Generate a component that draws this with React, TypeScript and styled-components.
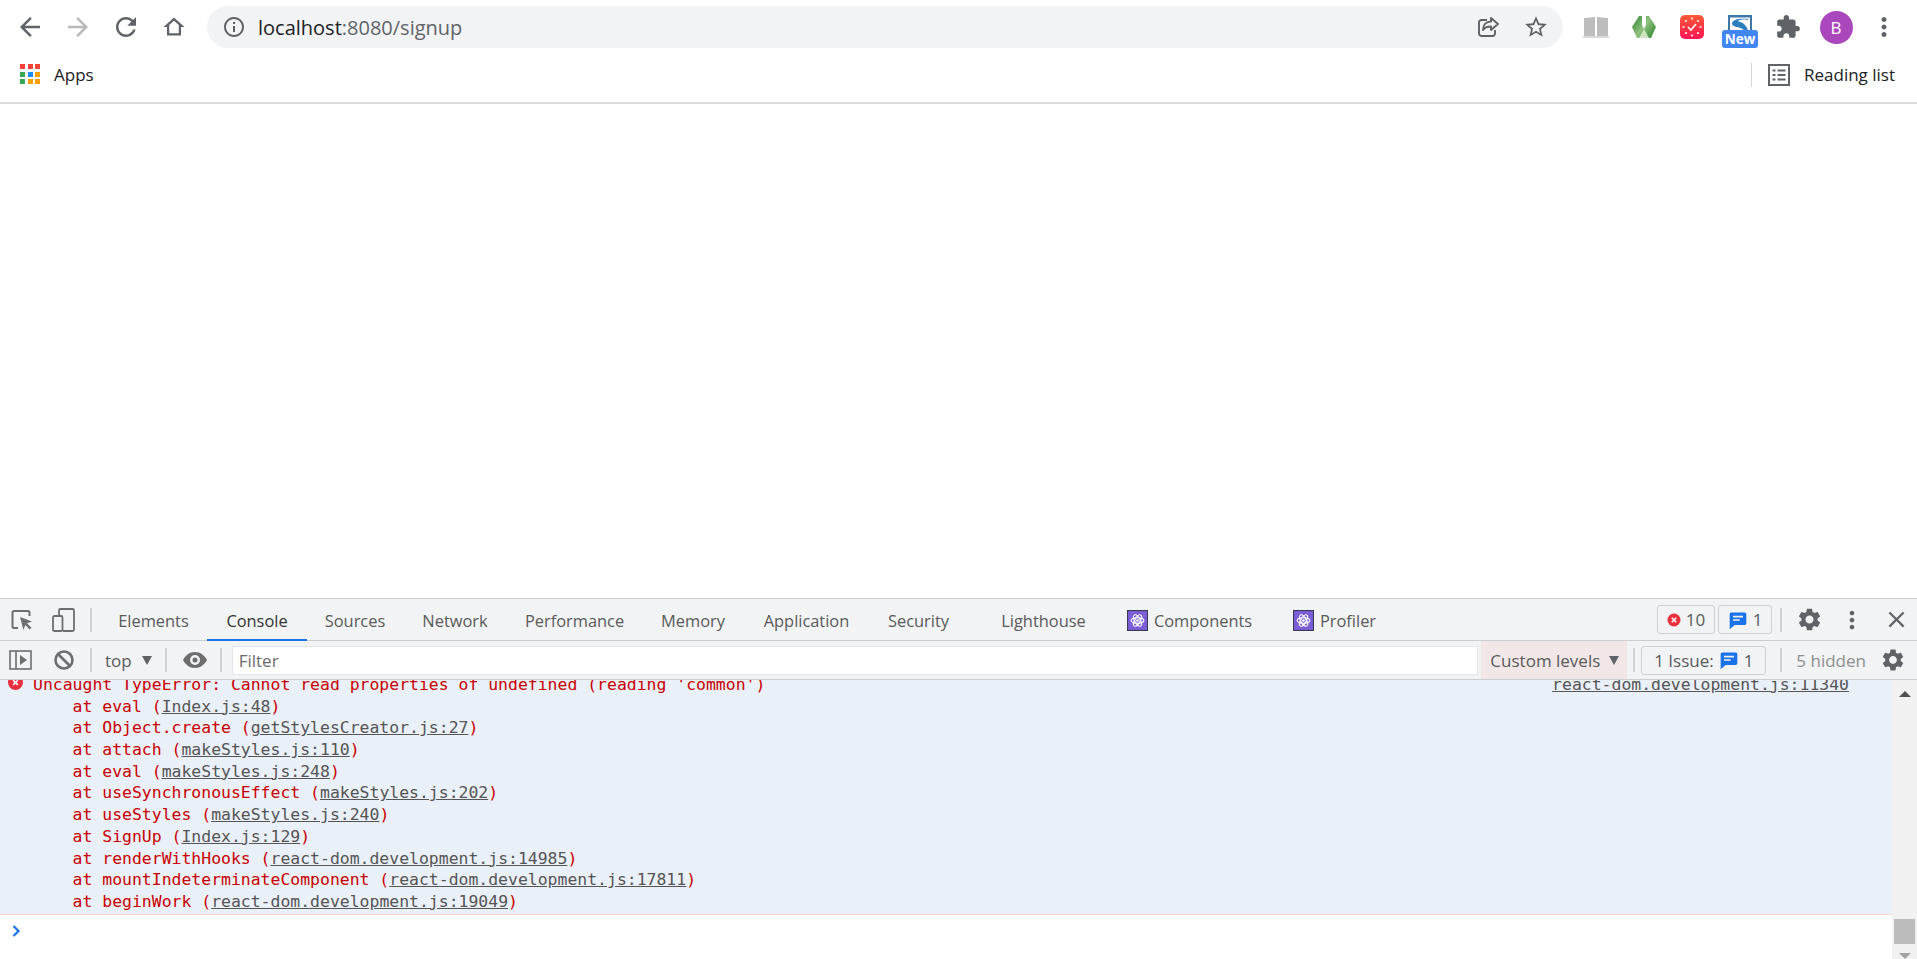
import React from 'react';
import styled, { createGlobalStyle } from "styled-components";

const GlobalStyle = createGlobalStyle`
  html, body {
    margin: 0;
    height: 100%;
    overflow: hidden;
    background: #fff;
    font-family: "Open Sans", "Noto Sans", sans-serif;
  }
`;

const Wrapper = styled.div`
  height: 100vh;
  display: flex;
  flex-direction: column;
`;

/* browser chrome */
const Toolbar = styled.div`
  height: 48px;
  flex: none;
  display: flex;
  align-items: flex-end;
  padding: 0 9px 0 6px;
`;
const IconSlot = styled.div`
  position: relative;
  width: 48px;
  height: 42px;
  flex: none;
  display: flex;
  align-items: center;
  justify-content: center;
`;
const Omnibox = styled.div`
  flex: 1;
  height: 42px;
  margin: 0 9px;
  padding: 0 3px 0 15px;
  border-radius: 21px;
  background: #f1f3f4;
  display: flex;
  align-items: center;
`;
const Url = styled.div`
  flex: 1;
  margin-left: 12px;
  font-size: 20px;
  color: #5f6368;
  span {
    color: #202124;
  }
`;
const Icon = styled.svg<{ $size?: number; $color?: string }>`
  width: ${(p) => p.$size ?? 24}px;
  height: ${(p) => p.$size ?? 24}px;
  flex: none;
  fill: ${(p) => p.$color ?? "#5f6368"};
  display: block;
`;
const Avatar = styled.div`
  width: 33px;
  height: 33px;
  border-radius: 50%;
  background: #ab47bc;
  color: #fff;
  font-size: 17px;
  display: flex;
  align-items: center;
  justify-content: center;
`;
const NewBadge = styled.div`
  position: absolute;
  left: 6px;
  top: 24px;
  width: 36px;
  height: 18px;
  border-radius: 3px;
  background: #4285f4;
  color: #fff;
  font-size: 13.5px;
  font-weight: 700;
  line-height: 18px;
  text-align: center;
`;
const ScreenSvg = styled.svg`
  width: 24px;
  height: 17px;
  margin-top: -7px;
`;

const BookmarksBar = styled.div`
  height: 54px;
  flex: none;
  border-bottom: 2px solid #dcdcdc;
  display: flex;
  align-items: center;
  padding: 0 22px 0 20px;
`;
const AppsGrid = styled.div`
  width: 20px;
  height: 20px;
  margin-top: -2px;
  display: grid;
  grid-template-columns: repeat(3, 5px);
  grid-template-rows: repeat(3, 5px);
  gap: 2.5px;
`;
const AppsDot = styled.i<{ $c: string }>`
  background: ${(p) => p.$c};
`;
const BookmarkLabel = styled.div`
  margin: -2px 0 0 14px;
  font-size: 17px;
  color: #202124;
`;
const ReadingList = styled.div`
  margin-left: auto;
  display: flex;
  align-items: center;
`;
const BarDivider = styled.div`
  width: 1px;
  height: 24px;
  background: #d4d5d7;
  margin-right: 16px;
`;

const Page = styled.div`
  flex: 1;
  background: #fff;
`;

/* devtools */
const DevTools = styled.div`
  height: 361px;
  flex: none;
  display: flex;
  flex-direction: column;
  border-top: 1px solid #cbcdd1;
  box-sizing: border-box;
  background: #f1f3f4;
`;
const TabBar = styled.div`
  height: 42px;
  flex: none;
  box-sizing: border-box;
  border-bottom: 1px solid #cbcdd1;
  display: flex;
  align-items: stretch;
`;
const ToolSlot = styled.div<{ $w: number }>`
  width: ${(p) => p.$w}px;
  flex: none;
  display: flex;
  align-items: center;
  justify-content: center;
`;
const Sep = styled.div<{ $mx?: number; $h?: number }>`
  width: 2px;
  height: ${(p) => p.$h ?? 24}px;
  align-self: center;
  flex: none;
  margin: 0 ${(p) => p.$mx ?? 0}px;
  background: #cfd1d4;
`;
const Tab = styled.div<{ $w: number; $active?: boolean; $gap?: number }>`
  width: ${(p) => p.$w}px;
  margin-right: ${(p) => p.$gap ?? 0}px;
  flex: none;
  display: flex;
  align-items: center;
  justify-content: center;
  gap: 6px;
  font-size: 16.4px;
  color: ${(p) => (p.$active ? "#333" : "#5a5a5a")};
  box-shadow: ${(p) => (p.$active ? "inset 0 -2px 0 #1a73e8" : "none")};
  margin-bottom: -1px;
`;
const TabEnd = styled.div`
  margin-left: auto;
  display: flex;
  align-items: center;
`;
const CountBadge = styled.div<{ $w: number; $ml?: number }>`
  width: ${(p) => p.$w}px;
  height: 29px;
  margin-left: ${(p) => p.$ml ?? 0}px;
  box-sizing: border-box;
  flex: none;
  border: 1px solid #cdcfd2;
  border-radius: 3px;
  display: flex;
  align-items: center;
  justify-content: center;
  gap: 5px;
  font-size: 17px;
  color: #5a5a5a;
`;
const ConsoleBar = styled.div`
  height: 39px;
  flex: none;
  box-sizing: border-box;
  border-bottom: 1px solid #cbcdd1;
  display: flex;
  align-items: center;
`;
const Label = styled.div<{ $c?: string; $ml?: number; $mr?: number }>`
  font-size: 17px;
  padding-top: 1px;
  color: ${(p) => p.$c ?? "#5a5a5a"};
  margin-left: ${(p) => p.$ml ?? 0}px;
  margin-right: ${(p) => p.$mr ?? 0}px;
  white-space: nowrap;
`;
const Caret = styled.div<{ $up?: boolean; $c?: string; $w?: number; $h?: number; $ml?: number }>`
  width: 0;
  height: 0;
  flex: none;
  margin-left: ${(p) => p.$ml ?? 0}px;
  border-left: ${(p) => p.$w ?? 5}px solid transparent;
  border-right: ${(p) => p.$w ?? 5}px solid transparent;
  ${(p) =>
    p.$up
      ? `border-bottom: ${p.$h ?? 9}px solid ${p.$c ?? "#5f6368"};`
      : `border-top: ${p.$h ?? 9}px solid ${p.$c ?? "#5f6368"};`}
`;
const FilterInput = styled.input`
  flex: 1;
  min-width: 0;
  height: 29px;
  box-sizing: border-box;
  padding: 1px 6px 0;
  border: 1px solid #e3e4e6;
  background: #fff;
  outline: none;
  font-family: inherit;
  font-size: 17px;
  &::placeholder {
    color: #6b6b6b;
    opacity: 1;
  }
`;
const LevelsButton = styled.div`
  width: 146px;
  height: 38px;
  flex: none;
  margin-left: 3px;
  box-sizing: border-box;
  padding-left: 9px;
  background: #f1e7e7;
  display: flex;
  align-items: center;
`;

const ConsoleBody = styled.div`
  flex: 1;
  min-height: 0;
  display: flex;
  background: #fff;
`;
const ConsoleMain = styled.div`
  flex: 1;
  min-width: 0;
  display: flex;
  flex-direction: column;
`;
const Messages = styled.div`
  height: 235px;
  flex: none;
  box-sizing: border-box;
  overflow: hidden;
  border-bottom: 1px solid #fdd6d6;
  background: #eaf0f8;
  font-family: "DejaVu Sans Mono", "Liberation Mono", monospace;
  font-size: 16.46px;
  line-height: 21.7px;
  color: #c80000;
`;
const ErrorLine = styled.div`
  position: relative;
  display: flex;
  align-items: center;
  margin-top: -6px;
  height: 21.7px;
  padding: 0 43px 0 33px;
  white-space: pre;
`;
const ErrorDot = styled.svg`
  position: absolute;
  left: 8px;
  top: 1px;
  width: 15px;
  height: 15px;
`;
const SourceLink = styled.a`
  color: #555;
  text-decoration: underline;
`;
const RightLink = styled(SourceLink)`
  margin-left: auto;
`;
const FrameLine = styled.div`
  height: 21.7px;
  padding-left: 33px;
  white-space: pre;
`;
const Prompt = styled.div`
  flex: 1;
  padding: 10px 0 0 12px;
`;
const PromptChevron = styled.svg`
  display: block;
  width: 9px;
  height: 12px;
`;
const Scrollbar = styled.div`
  width: 25px;
  flex: none;
  overflow: hidden;
  background: #f1f1f1;
  display: flex;
  flex-direction: column;
  align-items: center;
  padding-top: 11px;
`;
const Thumb = styled.div`
  width: 21px;
  height: 25px;
  flex: none;
  margin-top: auto;
  margin-bottom: 9px;
  background: #bcbcbc;
`;

const ARROW_BACK = "M20 11H7.83l5.59-5.59L12 4l-8 8 8 8 1.41-1.41L7.83 13H20v-2z";
const ARROW_FORWARD = "M12 4l-1.41 1.41L16.17 11H4v2h12.17l-5.58 5.59L12 20l8-8z";
const RELOAD = "M17.65 6.35C16.2 4.9 14.21 4 12 4c-4.42 0-7.99 3.58-7.99 8s3.57 8 7.99 8c3.73 0 6.84-2.55 7.73-6h-2.08c-.82 2.33-3.04 4-5.65 4-3.31 0-6-2.69-6-6s2.69-6 6-6c1.66 0 3.14.69 4.22 1.78L13 11h7V4l-2.35 2.35z";
const HOME = "M12 2.500L1.500 12H5v8.500h14V12h3.500L12 2.500zm4.800 15.800H7.200v-8.200l4.800-4.300 4.800 4.300v8.200z";
const INFO = "M11 7h2v2h-2zm0 4h2v6h-2zm1-9C6.48 2 2 6.48 2 12s4.48 10 10 10 10-4.48 10-10S17.52 2 12 2zm0 18c-4.41 0-8-3.59-8-8s3.59-8 8-8 8 3.59 8 8-3.59 8-8 8z";
const STAR = "M22 9.24l-7.19-.62L12 2 9.19 8.63 2 9.24l5.46 4.73L5.82 21 12 17.27 18.18 21l-1.63-7.03L22 9.24zM12 15.4l-3.76 2.27 1-4.28-3.32-2.88 4.38-.38L12 6.1l1.71 4.04 4.38.38-3.32 2.88 1 4.28L12 15.4z";
const PUZZLE = "M20.5 11H19V7c0-1.1-.9-2-2-2h-4V3.5C13 2.12 11.88 1 10.5 1S8 2.12 8 3.5V5H4c-1.1 0-1.99.9-1.99 2v3.8H3.5c1.49 0 2.7 1.21 2.7 2.7s-1.21 2.7-2.7 2.7H2V20c0 1.1.9 2 2 2h3.8v-1.5c0-1.49 1.21-2.7 2.7-2.7 1.49 0 2.7 1.21 2.7 2.7V22H17c1.1 0 2-.9 2-2v-4h1.5c1.38 0 2.5-1.12 2.5-2.5S21.88 11 20.5 11z";
const GEAR = "M19.14 12.94c.04-.3.06-.61.06-.94 0-.32-.02-.64-.07-.94l2.03-1.58c.18-.14.23-.41.12-.61l-1.92-3.32c-.12-.22-.37-.29-.59-.22l-2.39.96c-.5-.38-1.03-.7-1.62-.94l-.36-2.54c-.04-.24-.24-.41-.48-.41h-3.84c-.24 0-.43.17-.47.41l-.36 2.54c-.59.24-1.13.57-1.62.94l-2.39-.96c-.22-.08-.47 0-.59.22L2.74 8.87c-.12.21-.08.47.12.61l2.03 1.58c-.05.3-.09.63-.09.94s.02.64.07.94l-2.03 1.58c-.18.14-.23.41-.12.61l1.92 3.32c.12.22.37.29.59.22l2.39-.96c.5.38 1.03.7 1.62.94l.36 2.54c.05.24.24.41.48.41h3.84c.24 0 .44-.17.47-.41l.36-2.54c.59-.24 1.13-.56 1.62-.94l2.39.96c.22.08.47 0 .59-.22l1.92-3.32c.12-.22.07-.47-.12-.61l-2.01-1.58zM12 15.6c-1.98 0-3.6-1.62-3.6-3.6s1.62-3.6 3.6-3.6 3.6 1.62 3.6 3.6-1.62 3.6-3.6 3.6z";
const DOTS = "M12 8c1.1 0 2-.9 2-2s-.9-2-2-2-2 .9-2 2 .9 2 2 2zm0 2c-1.1 0-2 .9-2 2s.9 2 2 2 2-.9 2-2-.9-2-2-2zm0 6c-1.1 0-2 .9-2 2s.9 2 2 2 2-.9 2-2-.9-2-2-2z";
const CLOSE = "M19 6.41L17.59 5 12 10.59 6.41 5 5 6.41 10.59 12 5 17.59 6.41 19 12 13.41 17.59 19 19 17.59 13.41 12z";
const MESSAGE = "M4 3h16c1.1 0 2 .9 2 2v11c0 1.1-.9 2-2 2H8l-6 5V5c0-1.100.9-2 2-2zm2 4v2h12V7H6zm0 4v2h8v-2H6z";

const Glyph = ({ d, size, color }: { d: string; size?: number; color?: string }) => (
  <Icon viewBox="0 0 24 24" $size={size} $color={color}>
    <path fillRule="evenodd" d={d} />
  </Icon>
);

const ShareIcon = () => (
  <svg width="24" height="24" viewBox="0 0 24 24" fill="none" stroke="#5f6368" strokeWidth="1.9">
    <path d="M11 5H5.500A2.500 2.500 0 0 0 3 7.500v11A2.500 2.500 0 0 0 5.500 21h11a2.500 2.500 0 0 0 2.500-2.500V15" />
    <path strokeLinejoin="round" d="M15 3l7 6-7 6v-3.500c-4 0-6.500 1-8 3.500 0-5 3-8.500 8-8.500z" />
  </svg>
);

const BookIcon = () => (
  <svg width="26" height="24" viewBox="0 0 26 24">
    <path fill="#bdbdbd" d="M1 3l11 -1v19l-11 1zM14 2l11 1v19l-11-1z" />
    <path fill="#d9d9d9" d="M0 21h26v2H0z" />
  </svg>
);

const GreenIcon = () => (
  <svg width="24" height="22" viewBox="0 0 24 22">
    <defs>
      <linearGradient id="greenFade" x1="0" x2="1" y1="0" y2="0.700">
        <stop offset="0" stopColor="#2f7d32" />
        <stop offset="0.550" stopColor="#8fc27f" />
        <stop offset="1" stopColor="#3f8f3e" />
      </linearGradient>
    </defs>
    <path fill="url(#greenFade)" d="M7 0h3v9l2 4 2-4V0h3l7 11-5 11H5L0 11z" />
    <path fill="#cfe5c4" d="M12 13l5 9H7z" />
  </svg>
);

const ClockIcon = () => (
  <svg width="24" height="24" viewBox="0 0 24 24">
    <defs>
      <linearGradient id="clockFade" x1="0" x2="0" y1="0" y2="1">
        <stop offset="0" stopColor="#ff5a36" />
        <stop offset="1" stopColor="#ff1555" />
      </linearGradient>
    </defs>
    <rect width="24" height="24" rx="5" fill="url(#clockFade)" />
    <g fill="#fff">
      <circle cx="12" cy="3.500" r="1" />
      <circle cx="12" cy="20.500" r="1" />
      <circle cx="3.500" cy="12" r="1" />
      <circle cx="20.500" cy="12" r="1" />
      <circle cx="6" cy="6" r="1" />
      <circle cx="18" cy="6" r="1" />
      <circle cx="6" cy="18" r="1" />
      <circle cx="18" cy="18" r="1" />
    </g>
    <path d="M8 12l3 3 5-6" fill="none" stroke="#fff" strokeWidth="1.600" />
  </svg>
);

const ScreenIcon = () => (
  <ScreenSvg viewBox="0 0 24 17">
    <path fill="#3f78a8" d="M0 0h24v17h-2V2.500H2V17H0z" />
    <path fill="#2d7fc0" d="M4 9c0-4 5-6 16-5l0 1c-7-1-10 0-10 1.500 3 0 7 2 10 8l-4 1C13 11 5 13 4 9z" />
  </ScreenSvg>
);

const ReadingIcon = () => (
  <svg width="22" height="22" viewBox="0 0 22 22" fill="none" stroke="#5f6368" strokeWidth="2">
    <rect x="1" y="1" width="20" height="20" />
    <path d="M4.500 6.500h3M9.500 6.500h8M4.500 11h3M9.500 11h8M4.500 15.500h3M9.500 15.500h8" />
  </svg>
);

const InspectIcon = () => (
  <svg width="22" height="22" viewBox="0 0 22 22" fill="none" stroke="#6e6e6e" strokeWidth="2">
    <path d="M7 19H3a1.500 1.500 0 0 1-1.500-1.500v-14A1.500 1.500 0 0 1 3 2h14a1.500 1.500 0 0 1 1.500 1.500V7" />
    <path fill="#6e6e6e" stroke="none" d="M9 8l12 4.500-5 1.800 4.500 4.500-1.700 1.700-4.500-4.500-1.800 5z" />
  </svg>
);

const DeviceIcon = () => (
  <svg width="23" height="24" viewBox="0 0 23 24" fill="none" stroke="#6e6e6e" strokeWidth="1.800">
    <path d="M7 7V2.500A1.500 1.500 0 0 1 8.500 1h12A1.500 1.500 0 0 1 22 2.500v19a1.500 1.500 0 0 1-1.500 1.500H11" />
    <rect x="1" y="8" width="9.500" height="15" rx="1.500" />
  </svg>
);

const SidebarIcon = () => (
  <svg width="23" height="20" viewBox="0 0 23 20">
    <rect x="1" y="1" width="21" height="18" fill="none" stroke="#6e6e6e" strokeWidth="1.600" />
    <path d="M7 1v18" stroke="#6e6e6e" strokeWidth="1.600" />
    <path d="M11 5l7 5-7 5z" fill="#6e6e6e" />
  </svg>
);

const BlockIcon = () => (
  <svg width="20" height="20" viewBox="0 0 20 20" fill="none" stroke="#6e6e6e" strokeWidth="2.600">
    <circle cx="10" cy="10" r="8.500" />
    <path d="M4 4l12 12" />
  </svg>
);

const EyeIcon = () => (
  <svg width="24" height="16" viewBox="0 0 24 16">
    <path fill="#6e6e6e" fillRule="evenodd" d="M12 0C6.500 0 2.500 3.300 0 8c2.500 4.700 6.500 8 12 8s9.500-3.300 12-8C21.500 3.300 17.500 0 12 0zm0 13a5 5 0 1 1 0-10 5 5 0 0 1 0 10zm0-2.500a2.500 2.500 0 1 0 0-5 2.500 2.500 0 0 0 0 5z" />
  </svg>
);

const ReactIcon = () => (
  <svg width="21" height="21" viewBox="0 0 20 20">
    <rect x="0.500" y="0.500" width="19" height="19" fill="#7a5fd8" stroke="#3a3a55" />
    <g fill="none" stroke="#fff" strokeWidth="1.100">
      <ellipse cx="10" cy="10" rx="6" ry="2.600" />
      <ellipse cx="10" cy="10" rx="6" ry="2.600" transform="rotate(60 10 10)" />
      <ellipse cx="10" cy="10" rx="6" ry="2.600" transform="rotate(120 10 10)" />
    </g>
    <circle cx="10" cy="10" r="1.300" fill="#fff" />
  </svg>
);

const ErrorIcon = () => (
  <svg width="14" height="14" viewBox="0 0 14 14">
    <circle cx="7" cy="7" r="6.500" fill="#e8303f" />
    <path d="M4.800 4.800l4.400 4.400M9.200 4.800l-4.400 4.400" stroke="#fff" strokeWidth="1.500" />
  </svg>
);

const APPS_COLORS = ["#f44336", "#f44336", "#f44336", "#34a853", "#1a8cff", "#ffa000", "#34a853", "#ffa000", "#ffa000"];

const TABS = [
  { name: "Elements", w: 107 },
  { name: "Console", w: 100, active: true },
  { name: "Sources", w: 96 },
  { name: "Network", w: 104 },
  { name: "Performance", w: 135 },
  { name: "Memory", w: 102 },
  { name: "Application", w: 125 },
  { name: "Security", w: 99, gap: 14 },
  { name: "Lighthouse", w: 123, gap: 2 },
  { name: "Components", w: 165, gap: 2, react: true },
  { name: "Profiler", w: 121, react: true },
];

const FRAMES = [
  ["eval", "Index.js:48"],
  ["Object.create", "getStylesCreator.js:27"],
  ["attach", "makeStyles.js:110"],
  ["eval", "makeStyles.js:248"],
  ["useSynchronousEffect", "makeStyles.js:202"],
  ["useStyles", "makeStyles.js:240"],
  ["SignUp", "Index.js:129"],
  ["renderWithHooks", "react-dom.development.js:14985"],
  ["mountIndeterminateComponent", "react-dom.development.js:17811"],
  ["beginWork", "react-dom.development.js:19049"],
];

function App() {
  return (
    <Wrapper>
      <GlobalStyle />
      <Toolbar>
        <IconSlot><Glyph d={ARROW_BACK} size={30} /></IconSlot>
        <IconSlot><Glyph d={ARROW_FORWARD} size={30} color="#bababa" /></IconSlot>
        <IconSlot><Glyph d={RELOAD} size={30} /></IconSlot>
        <IconSlot><Glyph d={HOME} /></IconSlot>
        <Omnibox>
          <Glyph d={INFO} />
          <Url><span>localhost</span>:8080/signup</Url>
          <IconSlot><ShareIcon /></IconSlot>
          <IconSlot><Glyph d={STAR} size={26} /></IconSlot>
        </Omnibox>
        <IconSlot><BookIcon /></IconSlot>
        <IconSlot><GreenIcon /></IconSlot>
        <IconSlot><ClockIcon /></IconSlot>
        <IconSlot>
          <ScreenIcon />
          <NewBadge>New</NewBadge>
        </IconSlot>
        <IconSlot><Glyph d={PUZZLE} size={26} /></IconSlot>
        <IconSlot><Avatar>B</Avatar></IconSlot>
        <IconSlot><Glyph d={DOTS} size={30} /></IconSlot>
      </Toolbar>

      <BookmarksBar>
        <AppsGrid>
          {APPS_COLORS.map((c, i) => <AppsDot key={i} $c={c} />)}
        </AppsGrid>
        <BookmarkLabel>Apps</BookmarkLabel>
        <ReadingList>
          <BarDivider />
          <ReadingIcon />
          <BookmarkLabel>Reading list</BookmarkLabel>
        </ReadingList>
      </BookmarksBar>

      <Page />

      <DevTools>
        <TabBar>
          <ToolSlot $w={44}><InspectIcon /></ToolSlot>
          <ToolSlot $w={38}><DeviceIcon /></ToolSlot>
          <Sep $mx={8} />
          {TABS.map((t) => (
            <Tab key={t.name} $w={t.w} $active={t.active} $gap={t.gap}>
              {t.react && <ReactIcon />}
              {t.name}
            </Tab>
          ))}
          <TabEnd>
            <CountBadge $w={58}><ErrorIcon />10</CountBadge>
            <CountBadge $w={54} $ml={3}><Glyph d={MESSAGE} size={20} color="#1a73e8" />1</CountBadge>
            <Sep $mx={8} $h={24} />
            <ToolSlot $w={38}><Glyph d={GEAR} size={27} /></ToolSlot>
            <ToolSlot $w={47}><Glyph d={DOTS} size={28} /></ToolSlot>
            <ToolSlot $w={42}><Glyph d={CLOSE} size={27} /></ToolSlot>
          </TabEnd>
        </TabBar>

        <ConsoleBar>
          <ToolSlot $w={40}><SidebarIcon /></ToolSlot>
          <ToolSlot $w={48}><BlockIcon /></ToolSlot>
          <Sep $mx={2} />
          <Label $ml={11}>top</Label>
          <Caret $ml={10} />
          <Sep $mx={13} />
          <ToolSlot $w={30}><EyeIcon /></ToolSlot>
          <Sep $mx={10} />
          <FilterInput placeholder="Filter" />
          <LevelsButton>
            <Label>Custom levels</Label>
            <Caret $ml={9} />
          </LevelsButton>
          <Sep $mx={6} />
          <CountBadge $w={125}>1 Issue:<Glyph d={MESSAGE} size={20} color="#1a73e8" />1</CountBadge>
          <Sep $mx={14} />
          <Label $c="#8f8f8f" $mr={3}>5 hidden</Label>
          <ToolSlot $w={48}><Glyph d={GEAR} size={26} /></ToolSlot>
        </ConsoleBar>

        <ConsoleBody>
          <ConsoleMain>
            <Messages>
              <ErrorLine>
                <ErrorDot viewBox="0 0 14 14">
                  <circle cx="7" cy="7" r="7" fill="#e8303f" />
                  <path d="M4.800 4.800l4.400 4.400M9.200 4.800l-4.400 4.400" stroke="#fff" strokeWidth="1.500" />
                </ErrorDot>
                Uncaught TypeError: Cannot read properties of undefined (reading 'common')
                <RightLink>react-dom.development.js:11340</RightLink>
              </ErrorLine>
              {FRAMES.map(([fn, src]) => (
                <FrameLine key={fn + src}>
                  {"    at " + fn + " ("}
                  <SourceLink>{src}</SourceLink>)
                </FrameLine>
              ))}
            </Messages>
            <Prompt>
              <PromptChevron viewBox="0 0 9 12">
                <path d="M1.500 1l5 5-5 5" fill="none" stroke="#1a73e8" strokeWidth="2.200" />
              </PromptChevron>
            </Prompt>
          </ConsoleMain>
          <Scrollbar>
            <Caret $up $w={6} $h={6} $c="#505050" />
            <Thumb />
            <Caret $w={6} $h={6} $c="#a3a3a3" />
          </Scrollbar>
        </ConsoleBody>
      </DevTools>
    </Wrapper>
  );
}

export default App;
